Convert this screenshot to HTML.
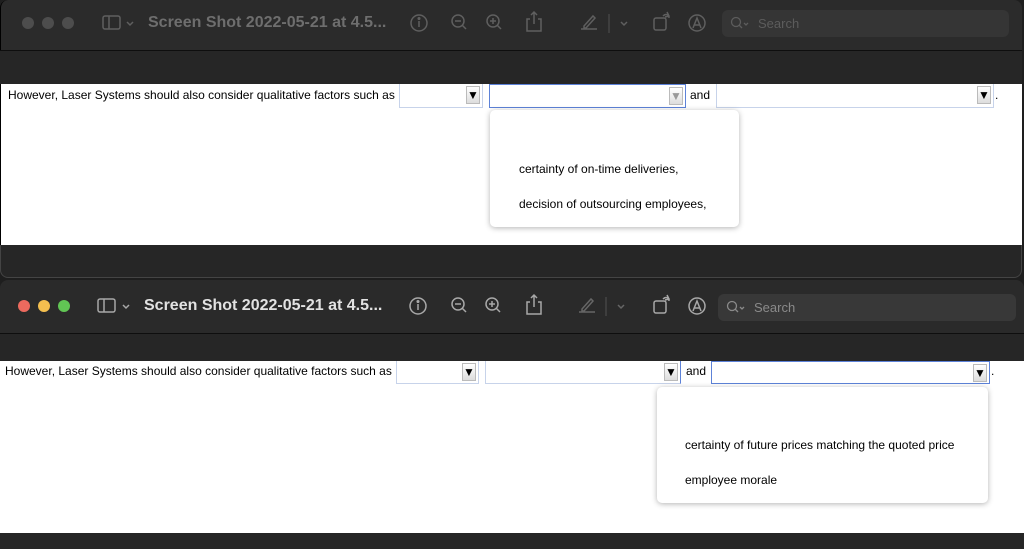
<!DOCTYPE html><html><head><style>
*{margin:0;padding:0;box-sizing:border-box}
body{width:1024px;height:549px;background:#1e1e1e;position:relative;overflow:hidden;font-family:"Liberation Sans",sans-serif}
.a{position:absolute}
.tb{background:#2b2b2b}
.band{background:#262626}
.w{background:#fff}
.t{font-size:12px;color:#000;white-space:nowrap}
.sel{position:absolute;background:#fff;border:1px solid #c7d3ea;border-top:none}
.sel.f{border:1px solid #5d82d8}
.arr{position:absolute;right:2px;top:2px;width:14px;height:18px;background:linear-gradient(#fff,#ddd);border:1px solid #bbb;font-size:12px;text-align:center;line-height:16px;color:#000}
.dd{position:absolute;background:#fff;border-radius:5px;box-shadow:0 1px 6px rgba(0,0,0,.3)}
.dd div{position:absolute;font-size:12px;color:#000;white-space:nowrap}
.title{font-size:16px;font-weight:bold;white-space:nowrap}
.srch{border-radius:6px;font-size:13px;padding-left:36px;line-height:27px}
</style></head><body>
<!-- window 1 -->
<div class="a tb" style="left:0;top:0;width:1022px;height:50px;border-radius:8px 8px 0 0;border-left:1px solid #000"></div>
<div class="a" style="left:0;top:50px;width:1022px;height:1px;background:#0e0e0e"></div>
<div class="a band" style="left:0;top:51px;width:1022px;height:33px"></div>
<div class="a w" style="left:0;top:84px;width:1022px;height:161px;border-left:1px solid #000"></div>
<div class="a band" style="left:0;top:245px;width:1022px;height:33px;border-radius:0 0 8px 8px;border:1px solid #444;border-top:none"></div>
<svg class="a" style="left:0;top:0" width="1024" height="50" fill="none" stroke="#5f5f5f" stroke-width="1.5">
<circle cx="28" cy="23" r="6" fill="#4d4d4d" stroke="none"/><circle cx="48" cy="23" r="6" fill="#4d4d4d" stroke="none"/><circle cx="68" cy="23" r="6" fill="#4d4d4d" stroke="none"/>
<rect x="103" y="16" width="17" height="13" rx="2"/><line x1="109" y1="16" x2="109" y2="29"/><path d="M127 22l3 3 3-3"/>
<circle cx="419" cy="23" r="8"/><line x1="419" y1="21" x2="419" y2="27"/><circle cx="419" cy="18.5" r=".8" fill="#5f5f5f"/>
<circle cx="458" cy="21" r="6"/><line x1="462" y1="25" x2="466" y2="29"/><line x1="455" y1="21" x2="461" y2="21"/>
<circle cx="493" cy="21" r="6"/><line x1="497" y1="25" x2="501" y2="29"/><line x1="490" y1="21" x2="496" y2="21"/><line x1="493" y1="18" x2="493" y2="24"/>
<path d="M530 19h-3v12h14v-12h-3M534 12v12M531 15l3-3 3 3"/>
<path d="M581 29h16M584 26l9-10 2 2-9 10h-2z"/><line x1="609" y1="14" x2="609" y2="33" stroke="#444"/><path d="M621 22l3 3 3-3"/>
<rect x="654" y="18" width="12" height="12" rx="2"/><path d="M663 16c3-3 6-1 6 2M667 12l2 4-4 1"/>
<circle cx="697" cy="23" r="8"/><path d="M693 28l4-10 4 10M694 25h6"/>
</svg>
<div class="a title" style="left:148px;top:14px;color:#6e6e6e">Screen Shot 2022-05-21 at 4.5...</div>
<div class="a srch" style="left:722px;top:10px;width:287px;height:27px;background:#353535;color:#5c5c5c">Search</div>
<svg class="a" style="left:730px;top:16px" width="24" height="16" fill="none" stroke="#5c5c5c" stroke-width="1.3"><circle cx="6" cy="6" r="4.5"/><line x1="9" y1="9" x2="12" y2="12"/><path d="M14 7l2 2 2-2"/></svg>
<div class="a t" style="left:8px;top:88px">However, Laser Systems should also consider qualitative factors such as</div>
<div class="sel" style="left:399px;top:84px;width:84px;height:24px"><div class="arr">▼</div></div>
<div class="sel f" style="left:489px;top:84px;width:197px;height:24px"><div class="arr" style="color:#999">▼</div></div>
<div class="a t" style="left:690px;top:88px">and</div>
<div class="sel" style="left:716px;top:84px;width:278px;height:24px"><div class="arr">▼</div></div>
<div class="a t" style="left:995px;top:88px">.</div>
<div class="dd" style="left:490px;top:110px;width:249px;height:117px"><div style="left:29px;top:52px">certainty of on-time deliveries,</div><div style="left:29px;top:87px">decision of outsourcing employees,</div></div>
<!-- window 2 -->
<div class="a tb" style="left:0;top:280px;width:1024px;height:53px;border-radius:8px 8px 0 0;background:#2a2a2a"></div>
<div class="a" style="left:0;top:333px;width:1024px;height:1px;background:#0e0e0e"></div>
<div class="a band" style="left:0;top:334px;width:1024px;height:27px"></div>
<div class="a w" style="left:0;top:361px;width:1024px;height:172px"></div>
<div class="a band" style="left:0;top:533px;width:1024px;height:16px"></div>
<svg class="a" style="left:0;top:283px" width="1024" height="50" fill="none" stroke="#a8a8a8" stroke-width="1.5">
<circle cx="24" cy="23" r="6" fill="#ec6a5e" stroke="none"/><circle cx="44" cy="23" r="6" fill="#f4bf4f" stroke="none"/><circle cx="64" cy="23" r="6" fill="#61c554" stroke="none"/>
<rect x="98" y="16" width="17" height="13" rx="2"/><line x1="104" y1="16" x2="104" y2="29"/><path d="M123 22l3 3 3-3"/>
<circle cx="418" cy="23" r="8"/><line x1="418" y1="21" x2="418" y2="27"/><circle cx="418" cy="18.5" r=".8" fill="#a8a8a8"/>
<circle cx="458" cy="21" r="6"/><line x1="462" y1="25" x2="466" y2="29"/><line x1="455" y1="21" x2="461" y2="21"/>
<circle cx="492" cy="21" r="6"/><line x1="496" y1="25" x2="500" y2="29"/><line x1="489" y1="21" x2="495" y2="21"/><line x1="492" y1="18" x2="492" y2="24"/>
<path d="M530 19h-3v12h14v-12h-3M534 12v12M531 15l3-3 3 3"/>
<g stroke="#666"><path d="M579 29h16M582 26l9-10 2 2-9 10h-2z"/><line x1="606" y1="14" x2="606" y2="33" stroke="#444"/><path d="M618 22l3 3 3-3"/></g>
<rect x="654" y="18" width="12" height="12" rx="2"/><path d="M663 16c3-3 6-1 6 2M667 12l2 4-4 1"/>
<circle cx="697" cy="23" r="8"/><path d="M693 28l4-10 4 10M694 25h6"/>
</svg>
<div class="a title" style="left:144px;top:297px;color:#e2e2e2">Screen Shot 2022-05-21 at 4.5...</div>
<div class="a srch" style="left:718px;top:294px;width:298px;height:27px;background:#383838;color:#8a8a8a">Search</div>
<svg class="a" style="left:726px;top:300px" width="24" height="16" fill="none" stroke="#8a8a8a" stroke-width="1.3"><circle cx="6" cy="6" r="4.5"/><line x1="9" y1="9" x2="12" y2="12"/><path d="M14 7l2 2 2-2"/></svg>
<div class="a t" style="left:5px;top:364px">However, Laser Systems should also consider qualitative factors such as</div>
<div class="sel" style="left:396px;top:361px;width:83px;height:23px"><div class="arr">▼</div></div>
<div class="sel" style="left:485px;top:361px;width:196px;height:23px;border-right:1px solid #5d82d8"><div class="arr">▼</div></div>
<div class="a t" style="left:686px;top:364px">and</div>
<div class="sel f" style="left:711px;top:361px;width:279px;height:23px"><div class="arr">▼</div></div>
<div class="a t" style="left:991px;top:364px">.</div>
<div class="dd" style="left:657px;top:387px;width:331px;height:116px"><div style="left:28px;top:51px">certainty of future prices matching the quoted price</div><div style="left:28px;top:86px">employee morale</div></div>
</body></html>
